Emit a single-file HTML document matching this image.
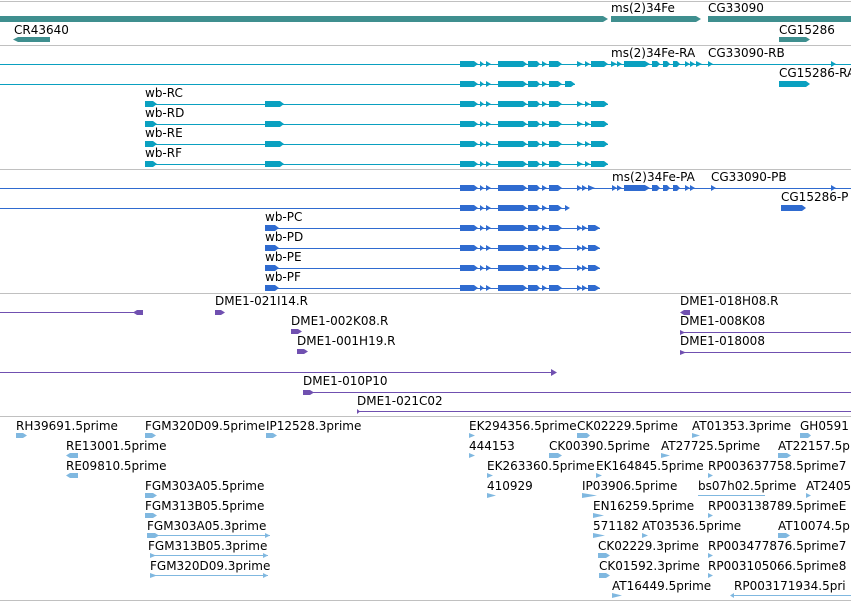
<!DOCTYPE html>
<html><head><meta charset="utf-8"><style>
html,body{margin:0;padding:0;background:#fff;width:851px;height:601px;overflow:hidden}
svg{display:block}
text{font-family:"DejaVu Sans","Liberation Sans",sans-serif;font-size:12px;fill:#000}
</style></head><body>
<svg width="851" height="601" viewBox="0 0 851 601" xmlns="http://www.w3.org/2000/svg">
<defs>
<g id="ex">
<polygon points="460,-3 474,-3 478,0 474,3 460,3"/>
<polygon points="480,-3 484,0 480,3"/>
<polygon points="486,-3 491,0 486,3"/>
<polygon points="498,-3 523,-3 527,0 523,3 498,3"/>
<polygon points="528,-3 537,-3 540,0 537,3 528,3"/>
<polygon points="542,-3 547,0 542,3"/>
<polygon points="549,-3 558,-3 562,0 558,3 549,3"/>
</g>
<g id="ex2">
<polygon points="577,-3 583,0 577,3"/>
<polygon points="585,-3 590,0 585,3"/>
<polygon points="591,-3 604,-3 608,0 604,3 591,3"/>
</g>
</defs>
<!-- separators -->
<g stroke="#c0c0c0" stroke-width="1">
<line x1="0" y1="1.5" x2="851" y2="1.5"/><line x1="0" y1="45.5" x2="851" y2="45.5"/>
<line x1="0" y1="169.5" x2="851" y2="169.5"/><line x1="0" y1="293.5" x2="851" y2="293.5"/>
<line x1="0" y1="416.5" x2="851" y2="416.5"/><line x1="0" y1="600.5" x2="851" y2="600.5"/>
</g>
<!-- track 1 -->
<g fill="#3f8f8f">
<polygon points="0,16 603,16 608,19 603,22 0,22"/>
<polygon points="611,16 696,16 701,19 696,22 611,22"/>
<rect x="708" y="16" width="143" height="6"/>
<polygon points="18,37 50,37 50,42 18,42 13,39.5"/>
<polygon points="779,37 806,37 810,39.5 806,42 779,42"/>
</g>
<text x="611" y="12">ms(2)34Fe</text><text x="708" y="12">CG33090</text>
<text x="14" y="34">CR43640</text><text x="779" y="34">CG15286</text>
<!-- track 2 cyan -->
<g fill="#0aa0c0" stroke="#0aa0c0">
<line x1="0" y1="64.5" x2="851" y2="64.5"/>
<line x1="0" y1="84.5" x2="575" y2="84.5"/>
<line x1="145" y1="104.5" x2="608" y2="104.5"/>
<line x1="145" y1="124.5" x2="608" y2="124.5"/>
<line x1="145" y1="144.5" x2="608" y2="144.5"/>
<line x1="145" y1="164.5" x2="608" y2="164.5"/>
</g>
<g fill="#0aa0c0">
<use href="#ex" y="64"/><use href="#ex2" y="64"/>
<polygon points="611,61 617,64 611,67"/><polygon points="617,61 622,64 617,67"/>
<polygon points="624,61 645,61 650,64 645,67 624,67"/>
<polygon points="652,61 657,61 660,64 657,67 652,67"/>
<polygon points="663,61 667,61 670,64 667,67 663,67"/>
<polygon points="673,61 677,61 680,64 677,67 673,67"/>
<polygon points="685,61 690,64 685,67"/><polygon points="690,61 695,64 690,67"/><polygon points="696,61 702,64 696,67"/>
<polygon points="708,61 713,64 708,67"/><polygon points="831,61 836,64 831,67"/>
<use href="#ex" y="84"/><polygon points="565,81 571,81 575,84 571,87 565,87"/>
<polygon points="779,81 806,81 810,84 806,87 779,87"/>
<g id="wbr">
<polygon points="145,101 153,101 157,104 153,107 145,107"/>
<polygon points="265,101 280,101 284,104 280,107 265,107"/>
<use href="#ex" y="104"/><use href="#ex2" y="104"/>
</g>
<use href="#wbr" y="20"/><use href="#wbr" y="40"/><use href="#wbr" y="60"/>
</g>
<text x="611" y="57">ms(2)34Fe-RA</text><text x="708" y="57">CG33090-RB</text>
<text x="779" y="77">CG15286-RA</text>
<text x="145" y="97">wb-RC</text><text x="145" y="117">wb-RD</text>
<text x="145" y="137">wb-RE</text><text x="145" y="157">wb-RF</text>
<!-- track 3 blue -->
<g fill="#2f6bd0" stroke="#2f6bd0">
<line x1="0" y1="188.5" x2="851" y2="188.5"/>
<line x1="0" y1="208.5" x2="565" y2="208.5"/>
<line x1="265" y1="228.5" x2="600" y2="228.5"/>
<line x1="265" y1="248.5" x2="600" y2="248.5"/>
<line x1="265" y1="268.5" x2="600" y2="268.5"/>
<line x1="265" y1="288.5" x2="600" y2="288.5"/>
</g>
<g fill="#2f6bd0">
<use href="#ex" y="188"/>
<polygon points="577,185 582,188 577,191"/><polygon points="582,185 587,188 582,191"/><polygon points="588,185 595,188 588,191"/>
<polygon points="612,185 617,188 612,191"/><polygon points="617,185 622,188 617,191"/>
<polygon points="624,185 645,185 650,188 645,191 624,191"/>
<polygon points="652,185 657,185 660,188 657,191 652,191"/>
<polygon points="663,185 667,185 670,188 667,191 663,191"/>
<polygon points="673,185 677,185 680,188 677,191 673,191"/>
<polygon points="685,185 690,188 685,191"/><polygon points="690,185 695,188 690,191"/>
<polygon points="711,185 716,188 711,191"/><polygon points="831,185 836,188 831,191"/>
<use href="#ex" y="208"/><polygon points="565,205 570,208 565,211"/>
<polygon points="781,205 802,205 806,208 802,211 781,211"/>
<g id="wbp">
<polygon points="265,225 275,225 279,228 275,231 265,231"/>
<use href="#ex" y="228"/>
<polygon points="577,225 582,228 577,231"/><polygon points="582,225 587,228 582,231"/><polygon points="588,225 595,225 600,228 595,231 588,231"/>
</g>
<use href="#wbp" y="20"/><use href="#wbp" y="40"/><use href="#wbp" y="60"/>
</g>
<text x="612" y="181">ms(2)34Fe-PA</text><text x="711" y="181">CG33090-PB</text>
<text x="781" y="201">CG15286-P</text>
<text x="265" y="221">wb-PC</text><text x="265" y="241">wb-PD</text>
<text x="265" y="261">wb-PE</text><text x="265" y="281">wb-PF</text>
<!-- track 4 purple -->
<g stroke="#7050b0">
<line x1="0" y1="312.5" x2="140" y2="312.5"/>
<line x1="0" y1="372.5" x2="555" y2="372.5"/>
<line x1="303" y1="392.5" x2="851" y2="392.5"/>
<line x1="357" y1="411.5" x2="851" y2="411.5"/>
<line x1="680" y1="332.5" x2="851" y2="332.5"/>
<line x1="680" y1="352.5" x2="851" y2="352.5"/>
</g>
<g fill="#7050b0">
<polygon points="137,310 143,310 143,315 137,315 133,312.5"/>
<polygon points="215,310 221,310 225,312.5 221,315 215,315"/>
<polygon points="291,329 298,329 302,331.5 298,334 291,334"/>
<polygon points="297,349 304,349 308,351.5 304,354 297,354"/>
<polygon points="551,369 557,372.5 551,376"/>
<polygon points="303,390 310,390 314,392.5 310,395 303,395"/>
<polygon points="357,409 360,411.5 357,414"/>
<polygon points="684,310 690,310 690,315 684,315 680,312.5"/>
<polygon points="680,330 685,332.5 680,335"/>
<polygon points="680,350 686,352.5 680,355"/>
</g>
<text x="215" y="305">DME1-021I14.R</text><text x="291" y="325">DME1-002K08.R</text>
<text x="297" y="345">DME1-001H19.R</text><text x="303" y="385">DME1-010P10</text>
<text x="357" y="405">DME1-021C02</text>
<text x="680" y="305">DME1-018H08.R</text><text x="680" y="325">DME1-008K08</text><text x="680" y="345">DME1-018008</text>
<!-- track 5 light blue -->
<g stroke="#80b8e0">
<line x1="147" y1="535.5" x2="270" y2="535.5"/>
<line x1="150" y1="555.5" x2="268" y2="555.5"/>
<line x1="150" y1="575.5" x2="268" y2="575.5"/>
<line x1="698" y1="495.5" x2="765" y2="495.5"/>
<line x1="734" y1="595.5" x2="851" y2="595.5"/>
</g>
<g fill="#80b8e0">
<polygon points="16,433 23,433 27,435.5 23,438 16,438"/>
<polygon points="145,433 152,433 156,435.5 152,438 145,438"/>
<polygon points="266,433 273,433 277,435.5 273,438 266,438"/>
<polygon points="469,433 475,435.5 469,438"/>
<polygon points="577,433 587,433 590,435.5 587,438 577,438"/>
<polygon points="692,433 700,435.5 692,438"/>
<polygon points="800,433 808,433 811,435.5 808,438 800,438"/>
<polygon points="70,453 78,453 78,458 70,458 66,455.5"/>
<polygon points="469,453 475,455.5 469,458"/>
<polygon points="549,453 558,453 562,455.5 558,458 549,458"/>
<polygon points="661,453 670,455.5 661,458"/>
<polygon points="778,453 787,453 791,455.5 787,458 778,458"/>
<polygon points="70,473 78,473 78,478 70,478 66,475.5"/>
<polygon points="487,473 493,475.5 487,478"/>
<polygon points="596,473 602,475.5 596,478"/>
<polygon points="708,473 713,475.5 708,478"/>
<polygon points="145,493 153,493 157,495.5 153,498 145,498"/>
<polygon points="487,493 496,495.5 487,498"/>
<polygon points="582,493 597,495.5 582,498"/>
<polygon points="806,493 811,495.5 806,498"/>
<polygon points="145,513 153,513 157,515.5 153,518 145,518"/>
<polygon points="593,513 604,515.5 593,518"/>
<polygon points="708,513 713,515.5 708,518"/>
<polygon points="147,533 155,533 159,535.5 155,538 147,538"/>
<polygon points="593,533 605,535.5 593,538"/>
<polygon points="642,533 648,535.5 642,538"/>
<polygon points="778,533 786,533 790,535.5 786,538 778,538"/>
<polygon points="598,553 606,553 610,555.5 606,558 598,558"/>
<polygon points="708,553 713,555.5 708,558"/>
<polygon points="150,553 156,555.5 150,558"/>
<polygon points="599,573 606,573 610,575.5 606,578 599,578"/>
<polygon points="708,573 713,575.5 708,578"/>
<polygon points="150,573 157,575.5 150,578"/>
<polygon points="612,593 622,595.5 612,598"/>
<polygon points="734,593 734,598 730,595.5"/>
<polygon points="265,533 270,535.5 265,538"/><polygon points="263,553 268,555.5 263,558"/><polygon points="263,573 268,575.5 263,578"/>
</g>
<text x="16" y="430">RH39691.5prime</text><text x="145" y="430">FGM320D09.5prime</text><text x="266" y="430">IP12528.3prime</text>
<text x="469" y="430">EK294356.5prime</text><text x="577" y="430">CK02229.5prime</text><text x="692" y="430">AT01353.3prime</text><text x="800" y="430">GH0591</text>
<text x="66" y="450">RE13001.5prime</text><text x="469" y="450">444153</text><text x="549" y="450">CK00390.5prime</text><text x="661" y="450">AT27725.5prime</text><text x="778" y="450">AT22157.5p</text>
<text x="66" y="470">RE09810.5prime</text><text x="487" y="470">EK263360.5prime</text><text x="596" y="470">EK164845.5prime</text><text x="708" y="470">RP003637758.5prime7</text>
<text x="145" y="490">FGM303A05.5prime</text><text x="487" y="490">410929</text><text x="582" y="490">IP03906.5prime</text><text x="698" y="490">bs07h02.5prime</text><text x="806" y="490">AT2405</text>
<text x="145" y="510">FGM313B05.5prime</text><text x="593" y="510">EN16259.5prime</text><text x="708" y="510">RP003138789.5primeE</text>
<text x="147" y="530">FGM303A05.3prime</text><text x="593" y="530">571182</text><text x="642" y="530">AT03536.5prime</text><text x="778" y="530">AT10074.5p</text>
<text x="148" y="550">FGM313B05.3prime</text><text x="598" y="550">CK02229.3prime</text><text x="708" y="550">RP003477876.5prime7</text>
<text x="150" y="570">FGM320D09.3prime</text><text x="599" y="570">CK01592.3prime</text><text x="708" y="570">RP003105066.5prime8</text>
<text x="612" y="590">AT16449.5prime</text><text x="734" y="590">RP003171934.5pri</text>
</svg>
</body></html>
